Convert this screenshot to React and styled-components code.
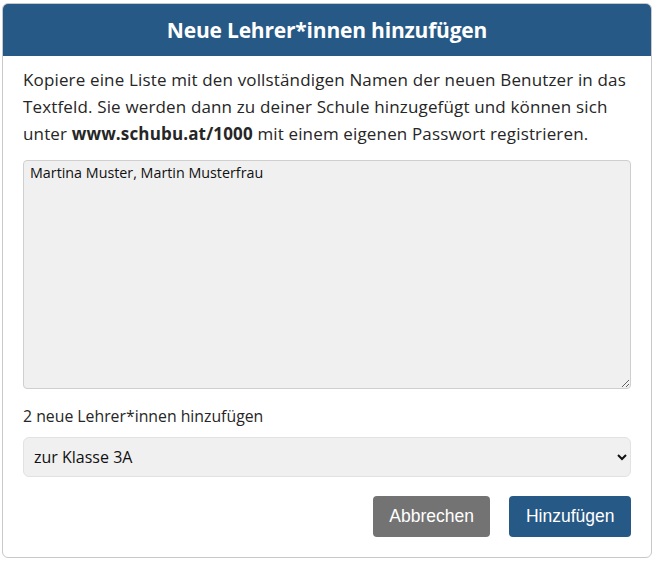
import React from "react";
import styled, { createGlobalStyle } from "styled-components";

const GlobalStyle = createGlobalStyle`
  html, body {
    margin: 0;
    padding: 0;
    background: #fff;
  }
  body {
    font-family: "Open Sans", "Noto Sans", sans-serif;
    color: #222;
  }
`;

const Page = styled.div`
  width: 656px;
  height: 564px;
  padding: 3px 4px 6px 2px;
  box-sizing: border-box;
`;

const Dialog = styled.div`
  border: 1px solid #c8c8c8;
  border-radius: 6px;
  overflow: hidden;
  background: #fff;
  height: 100%;
  box-sizing: border-box;
`;

const Header = styled.div`
  background: #265985;
  height: 52px;
  display: flex;
  align-items: center;
  justify-content: center;
`;

const Title = styled.h1`
  margin: 0;
  color: #fff;
  font-size: 21px;
  font-weight: 700;
  letter-spacing: -0.2px;
`;

const Body = styled.div`
  padding: 10px 20px 0 20px;
  display: flex;
  flex-direction: column;
`;

const Intro = styled.p`
  margin: 0;
  font-size: 17px;
  line-height: 27px;
  color: #262626;
  letter-spacing: 0.15px;
`;

const Names = styled.textarea`
  margin-top: 13px;
  height: 229px;
  box-sizing: border-box;
  padding: 3px 6px;
  background: #f0f0f0;
  border: 1px solid #cfcfcf;
  border-radius: 4px;
  font-family: "Open Sans", sans-serif;
  font-size: 14.3px;
  line-height: 18px;
  color: #111;
  resize: vertical;
`;

const Count = styled.div`
  margin-top: 16px;
  font-size: 15.8px;
  color: #262626;
`;

const Select = styled.select`
  margin-top: 10px;
  height: 40px;
  padding: 0 6px;
  background: #f0f0f0;
  border: 1px solid #e2e2e2;
  border-radius: 6px;
  font-family: "Open Sans", sans-serif;
  font-size: 16px;
  color: #111;
`;

const Actions = styled.div`
  display: flex;
  justify-content: flex-end;
  gap: 19px;
  margin-top: 19px;
`;

const Button = styled.button`
  height: 41px;
  padding: 0 16.5px;
  border: none;
  border-radius: 4px;
  background: ${(p) => (p.$primary ? "#265985" : "#737373")};
  color: #fff;
  font-family: "Liberation Sans", Arial, sans-serif;
  font-size: 17.5px;
  cursor: pointer;
`;

export default function App() {
  return (
    <>
      <GlobalStyle />
      <Page>
        <Dialog>
          <Header>
            <Title>Neue Lehrer*innen hinzufügen</Title>
          </Header>
          <Body>
            <Intro>
              Kopiere eine Liste mit den vollständigen Namen der neuen Benutzer in das
              Textfeld. Sie werden dann zu deiner Schule hinzugefügt und können sich
              unter <strong>www.schubu.at/1000</strong> mit einem eigenen Passwort registrieren.
            </Intro>
            <Names defaultValue="Martina Muster, Martin Musterfrau" />
            <Count>2 neue Lehrer*innen hinzufügen</Count>
            <Select defaultValue="3A">
              <option value="3A">zur Klasse 3A</option>
            </Select>
            <Actions>
              <Button>Abbrechen</Button>
              <Button $primary>Hinzufügen</Button>
            </Actions>
          </Body>
        </Dialog>
      </Page>
    </>
  );
}
